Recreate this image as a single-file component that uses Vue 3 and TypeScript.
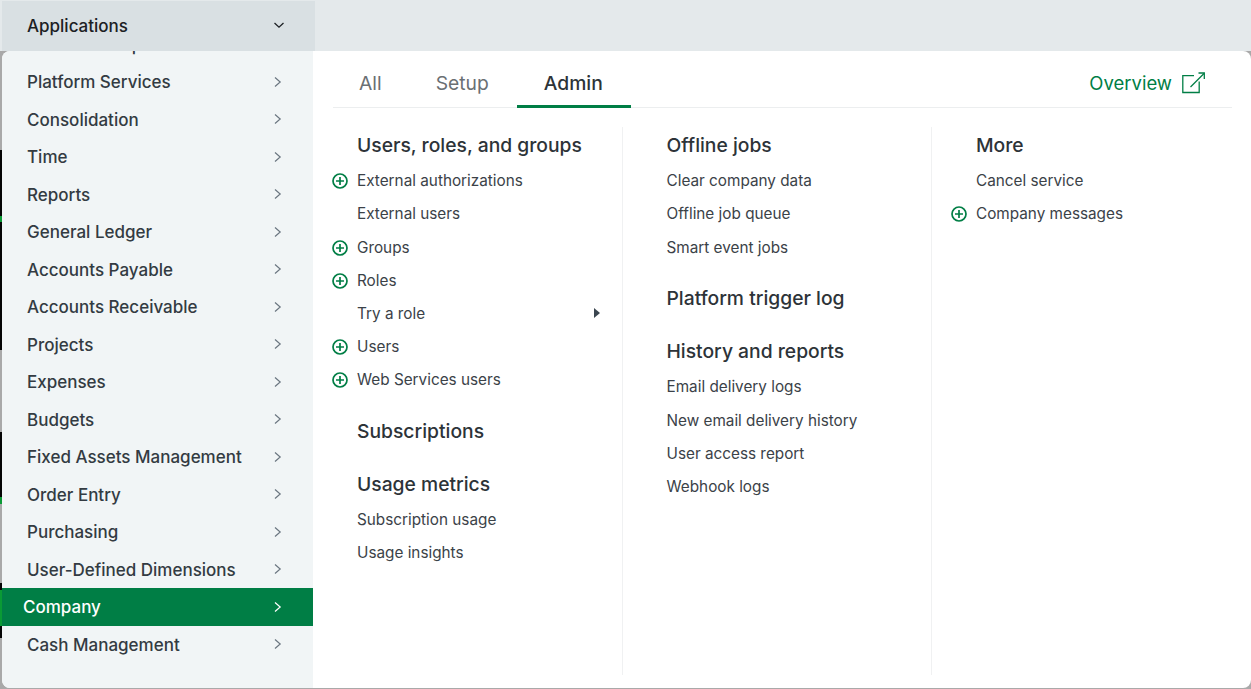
<script setup lang="ts">
/**
 * Applications menu - sidebar of modules plus the Admin tab of the selected one
 */

interface MenuItem {
  label: string
  add?: boolean
  submenu?: boolean
}

interface MenuGroup {
  title: string
  items: MenuItem[]
}

const modules = [
  'Customer Reports',
  'Platform Services',
  'Consolidation',
  'Time',
  'Reports',
  'General Ledger',
  'Accounts Payable',
  'Accounts Receivable',
  'Projects',
  'Expenses',
  'Budgets',
  'Fixed Assets Management',
  'Order Entry',
  'Purchasing',
  'User-Defined Dimensions',
  'Company',
  'Cash Management'
]

const tabs = ['All', 'Setup', 'Admin']

const columns: MenuGroup[][] = [
  [
    {
      title: 'Users, roles, and groups',
      items: [
        { label: 'External authorizations', add: true },
        { label: 'External users' },
        { label: 'Groups', add: true },
        { label: 'Roles', add: true },
        { label: 'Try a role', submenu: true },
        { label: 'Users', add: true },
        { label: 'Web Services users', add: true }
      ]
    },
    { title: 'Subscriptions', items: [] },
    {
      title: 'Usage metrics',
      items: [{ label: 'Subscription usage' }, { label: 'Usage insights' }]
    }
  ],
  [
    {
      title: 'Offline jobs',
      items: [
        { label: 'Clear company data' },
        { label: 'Offline job queue' },
        { label: 'Smart event jobs' }
      ]
    },
    { title: 'Platform trigger log', items: [] },
    {
      title: 'History and reports',
      items: [
        { label: 'Email delivery logs' },
        { label: 'New email delivery history' },
        { label: 'User access report' },
        { label: 'Webhook logs' }
      ]
    }
  ],
  [
    {
      title: 'More',
      items: [{ label: 'Cancel service' }, { label: 'Company messages', add: true }]
    }
  ]
]
</script>

<template>
  <div class="page">
    <header class="topbar">
      <button class="apps-btn">
        <span>Applications</span>
        <svg class="apps-btn__icon" width="12" height="12" viewBox="0 0 12 12">
          <path d="M1.5 4l4.5 4.2L10.5 4" fill="none" stroke="currentColor" stroke-width="1.3" />
        </svg>
      </button>
    </header>

    <div class="panel">
      <aside class="sidebar">
        <ul class="modules">
          <li
            v-for="name in modules"
            :key="name"
            class="module"
            :class="{ 'module--active': name === 'Company' }"
          >
            <span>{{ name }}</span>
            <svg class="module__icon" width="10" height="12" viewBox="0 0 10 12">
              <path d="M2 1.5L7.2 6L2 10.5" fill="none" stroke="currentColor" stroke-width="1.2" />
            </svg>
          </li>
        </ul>
      </aside>

      <main class="content">
        <nav class="tabs">
          <a
            v-for="tab in tabs"
            :key="tab"
            class="tab"
            :class="{ 'tab--active': tab === 'Admin' }"
          >{{ tab }}</a>
          <a class="overview">
            <span>Overview</span>
            <svg width="23" height="22" viewBox="0 0 23 22" fill="none" stroke="currentColor" stroke-width="1.3">
              <path d="M12 3.7H0.8V20.5H17.2V9.5" />
              <path d="M8.5 15L22 1.5" />
              <path d="M16.5 1H22.3V7" />
            </svg>
          </a>
        </nav>

        <div class="columns">
          <section v-for="(groups, i) in columns" :key="i" class="column">
            <div v-for="group in groups" :key="group.title" class="group">
              <h3 class="group__title">{{ group.title }}</h3>
              <ul class="group__items">
                <li v-for="item in group.items" :key="item.label" class="item">
                  <svg v-if="item.add" class="item__add" width="16" height="16" viewBox="0 0 16 16">
                    <circle cx="8" cy="8" r="7" fill="none" stroke="#007e45" stroke-width="1.7" />
                    <path d="M8 4v8M4 8h8" stroke="#007e45" stroke-width="1.7" />
                  </svg>
                  <span>{{ item.label }}</span>
                  <svg v-if="item.submenu" class="item__caret" width="6" height="10" viewBox="0 0 6 10">
                    <path d="M0 0L6 5L0 10z" fill="#3b4650" />
                  </svg>
                </li>
              </ul>
            </div>
          </section>
        </div>
      </main>
    </div>
  </div>
</template>

<style>
html,
body {
  margin: 0;
  height: 100%;
  overflow: hidden;
}
</style>

<style scoped>
.page {
  width: 1251px;
  height: 689px;
  display: flex;
  flex-direction: column;
  font-family: Inter, "Liberation Sans", sans-serif;
  color: #333b42;
  /* what shows through from the page behind the menu, down the left edge */
  background: linear-gradient(
    to bottom,
    #a9a9a9 0 150px,
    #050505 150px 216px,
    #0a9a35 216px 222px,
    #050505 222px 350px,
    #a9a9a9 350px 432px,
    #050505 432px 497px,
    #0a9a35 497px 504px,
    #a9a9a9 504px 583px,
    #050505 583px 590px,
    #0a9a35 590px 626px,
    #050505 626px 638px,
    #a9a9a9 638px
  );
}

.topbar {
  height: 51px;
  flex: none;
  box-sizing: border-box;
  padding: 1px 0 0 2px;
  background: #e4e9eb;
}

.apps-btn {
  width: 313px;
  height: 50px;
  display: flex;
  align-items: center;
  justify-content: space-between;
  padding: 0 30px 0 25px;
  border: none;
  background: #d9e0e3;
  color: #1c2024;
  font: 500 17px Inter, "Liberation Sans", sans-serif;
}

.apps-btn__icon {
  margin-top: -2px;
}

.panel {
  flex: 1;
  min-height: 0;
  display: flex;
  margin: 0 0 1px 2px;
  border-radius: 8px;
  overflow: hidden;
  background: #fff;
}

.sidebar {
  width: 311px;
  flex: none;
  overflow: hidden;
  background: #f1f5f6;
}

.modules {
  list-style: none;
  margin: -25.25px 0 0;
  padding: 0;
}

.module {
  height: 37.5px;
  display: flex;
  align-items: center;
  justify-content: space-between;
  padding: 0 30px 0 25px;
  font-size: 17px;
  font-weight: 500;
  color: #333b42;
}

.module__icon {
  color: #6b7680;
  margin-top: -1px;
}

.module--active {
  padding-left: 21px;
  background: #007e45;
  color: #fff;
}

.module--active .module__icon {
  color: #fff;
}

.content {
  flex: 1;
  min-width: 0;
  display: flex;
  flex-direction: column;
}

.tabs {
  height: 57px;
  flex: none;
  box-sizing: border-box;
  display: flex;
  align-items: stretch;
  margin: 0 19px 0 20px;
  border-bottom: 1px solid #eceeef;
}

.tab {
  display: flex;
  align-items: center;
  padding: 9px 27px 0;
  margin-bottom: -1px;
  border-bottom: 3px solid transparent;
  font-size: 19.3px;
  color: #6a6f73;
}

.tab:first-child {
  padding-left: 26px;
}

.tab--active {
  margin-left: 1px;
  padding-right: 28px;
  border-bottom-color: #007e45;
  color: #2d3338;
  font-weight: 500;
}

.overview {
  margin-left: auto;
  margin-right: 27px;
  display: flex;
  align-items: center;
  gap: 10px;
  padding-top: 7px;
  font-size: 18.5px;
  color: #007e45;
}

.columns {
  flex: 1;
  min-height: 0;
  display: flex;
  margin-top: 19px;
  padding-bottom: 13px;
}

.column {
  width: 309.5px;
  flex: none;
  box-sizing: border-box;
  padding-left: 44px;
  border-right: 1px solid #f0f1f2;
}

.column:last-child {
  border-right: none;
}

.group {
  margin-bottom: 16.7px;
}

.group__title {
  margin: 0;
  height: 36px;
  display: flex;
  align-items: center;
  font-size: 19.3px;
  font-weight: 500;
  color: #2d3338;
}

.group__items {
  list-style: none;
  margin: 1.15px 0 0;
  padding: 0;
}

.item {
  position: relative;
  height: 33.2px;
  display: flex;
  align-items: center;
  font-size: 15.3px;
  color: #3b4248;
}

.item__add {
  position: absolute;
  left: -25px;
  top: 9px;
}

.item__caret {
  position: absolute;
  left: 237px;
  top: 11px;
}
</style>
